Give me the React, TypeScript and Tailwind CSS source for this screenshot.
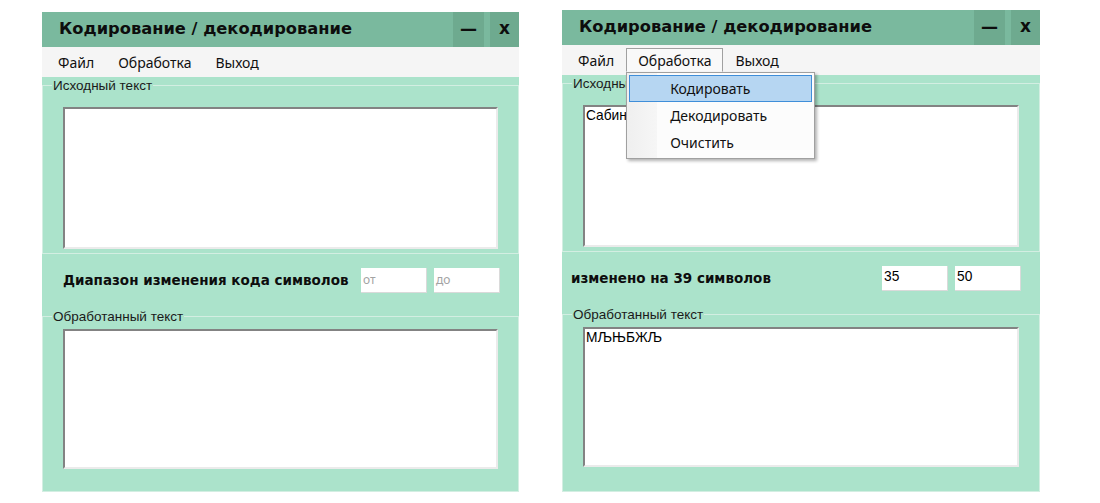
import React from 'react';

interface WindowProps {
  className: string;
  source: string;
  result: string;
  label: string;
  labelClass: string;
  from: string;
  to: string;
  menuOpen?: boolean;
}

const menuItems = ['Файл', 'Обработка', 'Выход'];
const dropItems = ['Кодировать', 'Декодировать', 'Очистить'];

const TextArea: React.FC<{ text: string; className: string }> = ({ text, className }) => (
  <div
    className={`bg-white border-2 border-t-[#838383] border-l-[#838383] border-r-[#ebebeb] border-b-[#ebebeb] px-px pt-px text-[13.75px] leading-[16px] text-black font-['Liberation_Sans',Arial,sans-serif] ${className}`}
  >
    {text}
  </div>
);

const SmallInput: React.FC<{ value: string; placeholder: string }> = ({ value, placeholder }) => (
  <div className="w-[66px] h-[25px] bg-white border-b border-r border-[#dadada] flex items-center pl-[2px]">
    {value ? (
      <span className="text-[13.75px] text-black font-['Liberation_Sans',Arial,sans-serif]">{value}</span>
    ) : (
      <span className="text-[12px] text-[#a3a3a3] font-['Noto_Sans',sans-serif]">{placeholder}</span>
    )}
  </div>
);

const Window: React.FC<WindowProps> = ({ className, source, result, label, labelClass, from, to, menuOpen }) => {
  return (
    <div className={`bg-[#abe3cb] flex flex-col ${className}`}>
      {/* title bar */}
      <div className="h-[35px] shrink-0 bg-[#7ab99e] flex items-stretch font-['DejaVu_Sans',Verdana,sans-serif] font-bold text-[#0d0d0d]">
        <div className="flex-1 flex items-center pl-[17px] text-[16.3px]">Кодирование / декодирование</div>
        <div className="w-[31px] bg-[#6eaa8f] flex items-center justify-center text-[17px] font-bold">—</div>
        <div className="w-[6px]" />
        <div className="w-[29px] bg-[#6eaa8f] flex items-center justify-center text-[17px] pb-[2px]">x</div>
      </div>

      {/* menu bar */}
      <div className="h-[30px] shrink-0 bg-[#f5f5f5] flex items-center pl-[4px] font-['Noto_Sans',sans-serif] text-[14px] text-[#111]">
        {menuItems.map((item, i) => {
          const open = menuOpen && i === 1;
          return (
            <div
              key={item}
              className={`relative h-[24px] px-[11px] flex items-center border ${
                open ? 'border-[#a0a0a0] border-b-transparent bg-[#f9f9f9] z-20' : 'border-transparent'
              }`}
            >
              {item}
              {open && (
                <div className="absolute left-[-1px] top-[23px] w-[189px] bg-[#fcfcfc] border border-[#a0a0a0] p-[2px] shadow-[2px_2px_3px_rgba(0,0,0,0.3)]">
                  <div className="absolute left-0 top-0 bottom-0 w-[30px] bg-gradient-to-r from-[#efefef] to-[#f6f6f6]" />
                  {dropItems.map((d, j) => (
                    <div
                      key={d}
                      className={`relative h-[27px] flex items-center ${
                        j === 0 ? 'bg-[#b6d6f2] border border-[#3f8ed9] pl-[40px]' : 'pl-[41px]'
                      }`}
                    >
                      {d}
                    </div>
                  ))}
                </div>
              )}
            </div>
          );
        })}
      </div>

      {/* source group */}
      <fieldset className="mt-px min-w-0 border border-[#d3eee2] font-['Liberation_Sans',Arial,sans-serif] text-[13.5px] text-[#1a1a1a]">
        <legend className="ml-[9px] px-px leading-[15px]">Исходный текст</legend>
        <TextArea text={source} className="mt-[14px] mb-[4px] mx-[20px] h-[142px]" />
      </fieldset>

      {/* range row */}
      <div className="h-[52px] shrink-0 flex items-center pr-[19px]">
        <div className={`font-['DejaVu_Sans',Verdana,sans-serif] font-bold text-[13.5px] text-[#0d0d0d] ${labelClass}`}>{label}</div>
        <div className="ml-auto flex gap-[7px]">
          <SmallInput value={from} placeholder="от" />
          <SmallInput value={to} placeholder="до" />
        </div>
      </div>

      {/* result group */}
      <fieldset className="mt-[3px] flex-1 min-w-0 border border-[#d3eee2] font-['Liberation_Sans',Arial,sans-serif] text-[13.5px] text-[#1a1a1a]">
        <legend className="ml-[9px] px-px leading-[15px]">Обработанный текст</legend>
        <TextArea text={result} className="mt-[5px] mx-[20px] h-[140px]" />
      </fieldset>
    </div>
  );
};

export default function App() {
  return (
    <div className="w-[1100px] h-[503px] bg-white flex items-start pl-[42px] gap-[43px] overflow-hidden">
      <Window
        className="mt-[12px] w-[477px] h-[480px]"
        source=""
        result=""
        label="Диапазон изменения кода символов"
        labelClass="pl-[21px]"
        from=""
        to=""
      />
      <Window
        className="mt-[10px] w-[478px] h-[482px]"
        source="Сабина"
        result="МЉЊБЖЉ"
        label="изменено на 39 символов"
        labelClass="pl-[9px]"
        from="35"
        to="50"
        menuOpen
      />
    </div>
  );
}
